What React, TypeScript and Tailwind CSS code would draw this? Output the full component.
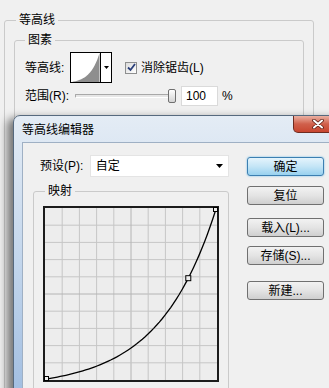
const K = 3;
const f = (t: number) => (Math.exp(K * t) - 1) / (Math.exp(K) - 1);

function curve(x0: number, y0: number, w: number, h: number, n = 40) {
  const pts: string[] = [];
  for (let i = 0; i <= n; i++) {
    const t = i / n;
    pts.push(`${(x0 + t * w).toFixed(2)},${(y0 + h - f(t) * h).toFixed(2)}`);
  }
  return pts;
}

function ContourThumb() {
  const pts = curve(0, 0, 29, 30);
  return (
    <div className="flex h-[31px] w-[42px] border border-black bg-white">
      <svg width="29" height="29" viewBox="0 0 29 30" className="shrink-0">
        <polygon points={`0,30 ${pts.join(' ')} 29,30`} fill="#8e8e8e" />
      </svg>
      <div className="flex flex-1 items-center justify-center border-l border-black">
        <svg width="5" height="3" viewBox="0 0 5 3">
          <path d="M0 0h5L2.5 3z" fill="#000" />
        </svg>
      </div>
    </div>
  );
}

function Checkbox() {
  return (
    <div className="flex h-[12px] w-[12px] items-center justify-center border border-[#8e8f8f] bg-linear-to-br from-[#dcdcdc] to-white">
      <svg width="9" height="9" viewBox="0 0 9 9">
        <path d="M1 4.5L3.5 7L8 1" fill="none" stroke="#2a3f7a" strokeWidth="1.8" />
      </svg>
    </div>
  );
}

function Btn({ children, primary }: { children: React.ReactNode; primary?: boolean }) {
  return (
    <div
      className={
        primary
          ? 'flex h-[19px] w-[77px] items-center justify-center rounded-[3px] border border-[#3c7fb1] bg-linear-to-b from-[#e5f4fc] via-[#c4e5f6] to-[#98d1ef] shadow-[0_0_2px_#5fb6e6]'
          : 'flex h-[19px] w-[77px] items-center justify-center rounded-[3px] border border-[#707070] bg-linear-to-b from-[#f2f2f2] via-[#e4e4e4] to-[#cfcfcf]'
      }
    >
      {children}
    </div>
  );
}

function Graph() {
  const lines = Array.from({ length: 9 }, (_, i) => 2 + (i + 1) * 17.2);
  const pts = curve(3, 3, 170, 170, 60);
  const t = 0.837;
  const cx = 3 + t * 170;
  const cy = 173 - f(t) * 170;
  return (
    <svg width="176" height="176" viewBox="0 0 176 176">
      <rect x="1" y="1" width="174" height="174" fill="#ededed" stroke="#1c1c1c" strokeWidth="2" />
      {lines.map((p, i) => (
        <g key={i} stroke={i === 4 ? '#b4b4b4' : '#c6c6c6'} strokeWidth="1">
          <line x1={p} y1="2" x2={p} y2="174" />
          <line x1="2" y1={p} x2="174" y2={p} />
        </g>
      ))}
      <polyline points={pts.join(' ')} fill="none" stroke="#000" strokeWidth="1.3" />
      <rect x="1.5" y="170.5" width="4" height="4" fill="#eee" stroke="#000" />
      <rect x={cx - 2.5} y={cy - 2.5} width="5" height="5" fill="#eee" stroke="#000" />
      <rect x="170.5" y="1.5" width="4" height="4" fill="#eee" stroke="#000" />
    </svg>
  );
}

export default function App() {
  return (
    <div className="relative h-[388px] w-[329px] overflow-hidden bg-[#f0f0f0] font-['Liberation_Sans','Noto_Sans_CJK_SC',sans-serif] text-[12px] leading-[16px] text-black">
      {/* background panel */}
      <div className="pl-[4px] pt-[12px]">
        <fieldset className="h-[420px] w-[310px] rounded-[3px] border border-[#cacaca]">
          <legend className="ml-[11px] px-[3px]">等高线</legend>
          <fieldset className="ml-[9px] mt-[4px] h-[150px] w-[290px] rounded-[3px] border border-[#cacaca]">
            <legend className="ml-[10px] px-[3px]">图素</legend>
            <div className="mt-[4px] flex items-center pl-[10px]">
              <span className="w-[45px]">等高线:</span>
              <ContourThumb />
              <div className="ml-[13px]">
                <Checkbox />
              </div>
              <span className="ml-[4px]">消除锯齿(L)</span>
            </div>
            <div className="mt-[3px] flex items-center pl-[10px]">
              <span className="w-[47px]">范围(R):</span>
              <div className="relative h-[20px] w-[104px]">
                <div className="absolute left-[3px] top-[8px] h-[4px] w-[97px] rounded-[1px] border border-[#a8a8a8] border-b-white bg-[#e6e6e6]" />
                <div className="absolute left-[96px] top-[3px] h-[14px] w-[8px] rounded-[2px] border border-[#707070] bg-linear-to-b from-white to-[#d4d4d4]" />
              </div>
              <div className="ml-[5px] flex h-[20px] w-[37px] items-center border border-[#dadada] bg-white pl-[4px]">100</div>
              <span className="ml-[4px]">%</span>
            </div>
          </fieldset>
        </fieldset>
      </div>

      {/* contour editor dialog */}
      <div className="absolute left-[13px] top-[115px] h-[290px] w-[330px] rounded-t-[7px] border border-[#56697e] bg-linear-to-b from-[#e4ecf5] via-[#c3d6ec] to-[#9fbce0] shadow-[-6px_3px_9px_rgba(0,0,0,0.5)]">
        <div className="h-[26px] pl-[8px] pt-[6px]">等高线编辑器</div>
        <div className="absolute left-[279px] top-0 flex h-[17px] w-[50px] items-center justify-center rounded-bl-[5px] border border-t-0 border-[#6e2b20] bg-linear-to-b from-[#eab0a2] via-[#d0604b] to-[#c8452f]">
          <svg width="12" height="10" viewBox="0 0 12 10">
            <path d="M2 1.5L10 8.5M10 1.5L2 8.5" stroke="#5a1c12" strokeWidth="3.6" strokeLinecap="round" />
            <path d="M2 1.5L10 8.5M10 1.5L2 8.5" stroke="#fff" strokeWidth="2" strokeLinecap="round" />
          </svg>
        </div>
        <div className="ml-[8px] flex h-[260px] border border-[#9fb0c4] bg-[#f0f0f0]">
          <div className="w-[206px] shrink-0 pt-[12px]">
            <div className="flex items-center pl-[17px]">
              <span className="w-[50px]">预设(P):</span>
              <div className="flex h-[22px] w-[140px] items-center justify-between border border-[#e4e4e4] bg-white pl-[5px] pr-[5px]">
                <span>自定</span>
                <svg width="7" height="4" viewBox="0 0 7 4">
                  <path d="M0 0h7L3.5 4z" fill="#000" />
                </svg>
              </div>
            </div>
            <fieldset className="ml-[10px] mt-[6px] h-[220px] w-[196px] rounded-[3px] border border-[#cacaca]">
              <legend className="ml-[11px] px-[3px]">映射</legend>
              <div className="ml-[9px] mt-[7px]">
                <Graph />
              </div>
            </fieldset>
          </div>
          <div className="ml-[18px] flex flex-col pt-[14px]">
            <Btn primary>确定</Btn>
            <div className="mt-[10px]">
              <Btn>复位</Btn>
            </div>
            <div className="mt-[13px]">
              <Btn>载入(L)...</Btn>
            </div>
            <div className="mt-[9px]">
              <Btn>存储(S)...</Btn>
            </div>
            <div className="mt-[16px]">
              <Btn>新建...</Btn>
            </div>
          </div>
        </div>
      </div>
    </div>
  );
}
